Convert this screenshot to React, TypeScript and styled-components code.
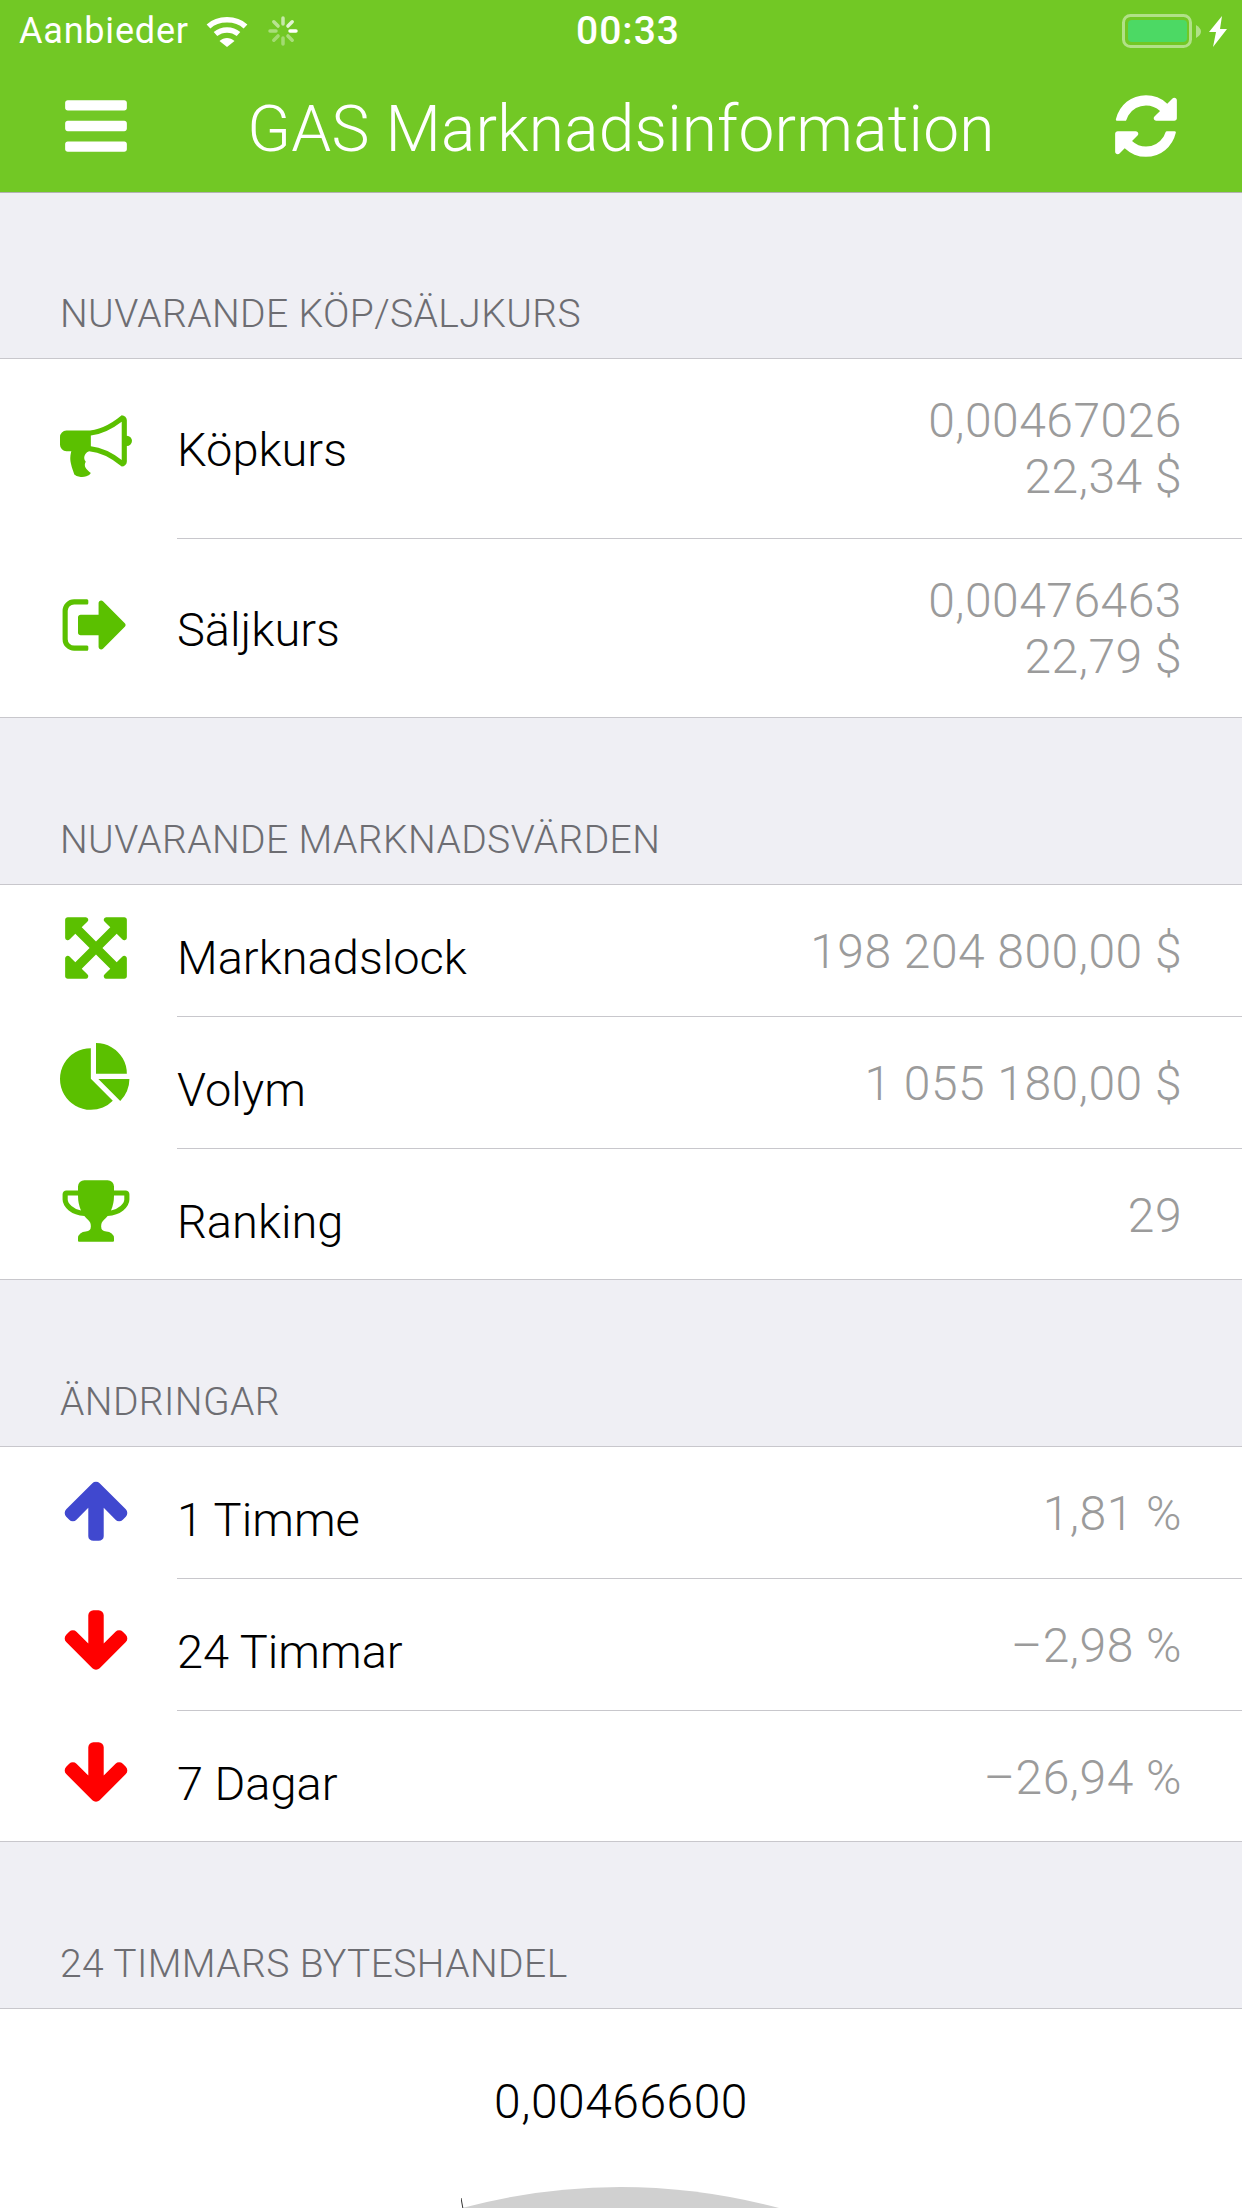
import React from 'react';
import styled, { createGlobalStyle } from 'styled-components';

const GlobalStyle = createGlobalStyle`
  html, body {
    margin: 0;
    padding: 0;
    background: #efeff4;
  }
`;

const FONT = `Roboto, "Liberation Sans", sans-serif`;

const ICONS = {
  bars: 'M1664 1344v128q0 26-19 45t-45 19h-1408q-26 0-45-19t-19-45v-128q0-26 19-45t45-19h1408q26 0 45 19t19 45zm0-512v128q0 26-19 45t-45 19h-1408q-26 0-45-19t-19-45v-128q0-26 19-45t45-19h1408q26 0 45 19t19 45zm0-512v128q0 26-19 45t-45 19h-1408q-26 0-45-19t-19-45v-128q0-26 19-45t45-19h1408q26 0 45 19t19 45z',
  refresh:
    'M1639 1056q0 5-1 7-64 268-268 434.5t-478 166.5q-146 0-282.5-55t-243.5-157l-129 129q-19 19-45 19t-45-19-19-45v-448q0-26 19-45t45-19h448q26 0 45 19t19 45-19 45l-137 137q71 66 161 102t187 36q134 0 250-65t186-179q11-17 53-117 8-23 30-23h192q13 0 22.5 9.5t9.5 22.5zm25-800v448q0 26-19 45t-45 19h-448q-26 0-45-19t-19-45 19-45l138-138q-148-137-349-137-134 0-250 65t-186 179q-11 17-53 117-8 23-30 23h-199q-13 0-22.5-9.5t-9.5-22.5v-7q65-268 270-434.5t480-166.5q146 0 284 55.5t245 156.5l130-129q19-19 45-19t45 19 19 45z',
  bullhorn:
    'M1664 640q53 0 90.5 37.5t37.5 90.5-37.5 90.5-90.5 37.5v384q0 52-38 90t-90 38q-417-347-812-380-58 19-91 66t-31 100.5 40 92.5q-20 33-23 65.5t6 58 33.5 55 48 50 61.5 50.5q-29 58-111.5 83t-168.5 11.5-132-55.5q-7-23-29.5-87.5t-32-94.5-23-89-15-101 3.5-98.5 22-110.5h-122q-66 0-113-47t-47-113v-192q0-66 47-113t113-47h480q435 0 896-384 52 0 90 38t38 90v384zm-128 604v-954q-394 302-768 343v270q377 42 768 341z',
  signOut:
    'M704 1440q0 4 1 20t.5 26.5-3 23.5-10 19.5-20.5 6.5h-320q-119 0-203.5-84.5t-84.5-203.5v-704q0-119 84.5-203.5t203.5-84.5h320q13 0 22.5 9.5t9.5 22.5q0 4 1 20t.5 26.5-3 23.5-10 19.5-20.5 6.5h-320q-66 0-113 47t-47 113v704q0 66 47 113t113 47h312l11.5 1 11.5 3 8 5.5 7 9 2 13.5zm928-544q0 26-19 45l-544 544q-19 19-45 19t-45-19-19-45v-288h-448q-26 0-45-19t-19-45v-384q0-26 19-45t45-19h448v-288q0-26 19-45t45-19 45 19l544 544q19 19 19 45z',
  expand:
    'M1411 541l-355 355 355 355 144-144q29-31 70-14 39 17 39 59v448q0 26-19 45t-45 19h-448q-42 0-59-40-17-39 14-69l144-144-355-355-355 355 144 144q31 30 14 69-17 40-59 40h-448q-26 0-45-19t-19-45v-448q0-42 40-59 39-17 69 14l144 144 355-355-355-355-144 144q-19 19-45 19-12 0-24-5-40-17-40-59v-448q0-26 19-45t45-19h448q42 0 59 40 17 39-14 69l-144 144 355 355 355-355-144-144q-31-30-14-69 17-40 59-40h448q26 0 45 19t19 45v448q0 42-39 59-13 5-25 5-26 0-45-19z',
  pie: 'M768 890l546 546q-106 108-247.5 168t-298.5 60q-209 0-385.5-103t-279.5-279.5-103-385.5 103-385.5 279.5-279.5 385.5-103v762zm187 6h773q0 157-60 298.5t-168 247.5zm709-128h-768v-768q209 0 385.5 103t279.5 279.5 103 385.5z',
  trophy:
    'M522 883q-74-162-74-371h-256v96q0 78 94.5 162t235.5 113zm1078-275v-96h-256q0 209-74 371 141-29 235.5-113t94.5-162zm128-128v128q0 71-41.5 143t-112 130-173 97.5-215.5 44.5q-42 54-95 95-38 34-52.5 72.5t-14.5 89.5q0 54 30.5 91t97.5 37q75 0 133.5 45.5t58.5 114.5v64q0 14-9 23t-23 9h-832q-14 0-23-9t-9-23v-64q0-69 58.5-114.5t133.5-45.5q67 0 97.5-37t30.5-91q0-51-14.5-89.5t-52.5-72.5q-53-41-95-95-113-5-215.5-44.5t-173-97.5-112-130-41.5-143v-128q0-40 28-68t68-28h288v-96q0-66 47-113t113-47h576q66 0 113 47t47 113v96h288q40 0 68 28t28 68z',
  up: 'M1675 971q0 51-37 90l-75 75q-38 38-91 38-54 0-90-38l-294-293v704q0 52-37.5 84.5t-90.5 32.5h-128q-53 0-90.5-32.5t-37.5-84.5v-704l-294 293q-36 38-90 38t-90-38l-75-75q-38-38-38-90 0-53 38-91l651-651q35-37 90-37 54 0 91 37l651 651q37 39 37 91z',
  down: 'M1675 832q0 53-37 90l-651 652q-39 37-91 37-53 0-90-37l-651-652q-38-36-38-90 0-53 38-91l74-75q39-37 91-37 53 0 90 37l294 294v-704q0-52 38-90t90-38h128q52 0 90 38t38 90v704l294-294q37-37 90-37 52 0 91 37l75 75q37 39 37 91z',
};

type IconName = keyof typeof ICONS;

const GREEN = '#5bc000';
const BLUE = '#4048cf';
const RED = '#ff0000';

const Page = styled.div`
  width: 1242px;
  height: 2208px;
  overflow: hidden;
  background: #efeff4;
  font-family: ${FONT};
`;

const Header = styled.header`
  height: 192px;
  background: #72c825;
  color: #fff;
  box-shadow: 0 1px 0 #b2b2b2;
`;

const StatusBar = styled.div`
  height: 62px;
  padding: 0 15px 0 19px;
  display: grid;
  grid-template-columns: 1fr auto 1fr;
  align-items: center;
`;

const StatusLeft = styled.div`
  display: flex;
  align-items: center;
  gap: 17px;
  font-size: 36px;
  letter-spacing: 0.8px;
`;

const StatusRight = styled.div`
  display: flex;
  align-items: center;
  justify-content: flex-end;
  gap: 8px;
`;

const Clock = styled.div`
  margin-left: 10px;
  font-size: 39px;
  font-weight: 500;
  letter-spacing: 1px;
`;

const NavBar = styled.div`
  height: 130px;
  box-sizing: border-box;
  padding: 0 60px 3px;
  display: flex;
  align-items: center;
  justify-content: space-between;
`;

const NavTitle = styled.h1`
  margin: 8px 0 0;
  font-size: 64px;
  font-weight: 300;
  letter-spacing: 0.2px;
  line-height: 1;
`;

const NavButton = styled.svg`
  width: 72px;
  height: 72px;
  fill: #fff;
  flex: none;
`;

const SectionTitle = styled.div`
  height: 166px;
  box-sizing: border-box;
  padding: 0 60px 22px;
  display: flex;
  align-items: flex-end;
  font-size: 39px;
  font-weight: 300;
  letter-spacing: 0.4px;
  line-height: 44px;
  color: #6d6d72;
`;

const Card = styled.section`
  background: #fff;
  border-top: 1px solid #c8c7cc;
  border-bottom: 1px solid #c8c7cc;
`;

const Row = styled.div<{ $tall?: boolean }>`
  height: ${({ $tall }) => ($tall ? '179px' : 'calc(394px / 3)')};
  display: flex;
  padding-left: 60px;
`;

const RowIcon = styled.svg<{ $color: string; $tall?: boolean }>`
  width: 72px;
  height: 72px;
  flex: none;
  margin-top: ${({ $tall }) => ($tall ? '51px' : '27px')};
  fill: ${({ $color }) => $color};
`;

const RowBody = styled.div<{ $first?: boolean }>`
  flex: 1;
  margin-left: 45px;
  padding-right: 60px;
  display: flex;
  justify-content: space-between;
  border-top: ${({ $first }) => ($first ? 'none' : '1px solid #c8c7cc')};
`;

const RowLabel = styled.div<{ $tall?: boolean }>`
  font-size: 47px;
  font-weight: 300;
  line-height: 56px;
  color: #000;
  margin-top: ${({ $tall }) => ($tall ? '63px' : '45px')};
`;

const RowValue = styled.div<{ $tall?: boolean }>`
  font-size: 48px;
  font-weight: 300;
  letter-spacing: 0.5px;
  line-height: 56px;
  color: #9b9b9b;
  text-align: right;
  margin-top: ${({ $tall }) => ($tall ? '34px' : '39px')};
`;

const GaugeCard = styled.section`
  background: #fff;
  border-top: 1px solid #c8c7cc;
  height: 200px;
  display: flex;
  flex-direction: column;
  align-items: center;
`;

const GaugeValue = styled.div`
  margin-top: 65px;
  font-size: 48px;
  font-weight: 300;
  letter-spacing: 0.5px;
  line-height: 56px;
  color: #000;
`;

const GaugeArc = styled.svg`
  margin-top: 57px;
  width: 320px;
  height: 22px;
  flex: none;
`;

type RowData = {
  icon: IconName;
  color: string;
  label: string;
  values: string[];
};

type SectionData = {
  title: string;
  tall?: boolean;
  rows: RowData[];
};

const SECTIONS: SectionData[] = [
  {
    title: 'NUVARANDE KÖP/SÄLJKURS',
    tall: true,
    rows: [
      { icon: 'bullhorn', color: GREEN, label: 'Köpkurs', values: ['0,00467026', '22,34 $'] },
      { icon: 'signOut', color: GREEN, label: 'Säljkurs', values: ['0,00476463', '22,79 $'] },
    ],
  },
  {
    title: 'NUVARANDE MARKNADSVÄRDEN',
    rows: [
      { icon: 'expand', color: GREEN, label: 'Marknadslock', values: ['198 204 800,00 $'] },
      { icon: 'pie', color: GREEN, label: 'Volym', values: ['1 055 180,00 $'] },
      { icon: 'trophy', color: GREEN, label: 'Ranking', values: ['29'] },
    ],
  },
  {
    title: 'ÄNDRINGAR',
    rows: [
      { icon: 'up', color: BLUE, label: '1 Timme', values: ['1,81 %'] },
      { icon: 'down', color: RED, label: '24 Timmar', values: ['–2,98 %'] },
      { icon: 'down', color: RED, label: '7 Dagar', values: ['–26,94 %'] },
    ],
  },
];

const SPINNER_TICKS = [
  { angle: 0, opacity: 0.6 },
  { angle: 45, opacity: 0.8 },
  { angle: 90, opacity: 1 },
  { angle: 135, opacity: 0.4 },
  { angle: 180, opacity: 0.35 },
  { angle: 225, opacity: 0.35 },
  { angle: 270, opacity: 0.4 },
  { angle: 315, opacity: 0.5 },
];

const WifiIcon = () => (
  <svg width="45" height="31" viewBox="0 0 45 31" fill="none" stroke="#fff" strokeWidth="5.5">
    <path d="M2.500 10.500C12 1.500 30 1.500 39.500 10.500" />
    <path d="M9.500 18C16 12.500 26 12.500 32.500 18" />
    <path d="M21 31L13.500 25C18 21 24 21 28.500 25Z" fill="#fff" stroke="none" />
  </svg>
);

const SpinnerIcon = () => (
  <svg width="30" height="30" viewBox="0 0 30 30" stroke="#fff" strokeWidth="3.5" strokeLinecap="round">
    {SPINNER_TICKS.map(({ angle, opacity }) => (
      <line key={angle} x1="15" y1="2" x2="15" y2="8" opacity={opacity} transform={`rotate(${angle} 15 15)`} />
    ))}
  </svg>
);

const BatteryIcon = () => (
  <svg width="79" height="34" viewBox="0 0 79 34">
    <rect x="1.500" y="1.500" width="67" height="31" rx="7" fill="none" stroke="#fff" strokeOpacity="0.45" strokeWidth="3" />
    <rect x="6" y="6" width="59" height="22" rx="4" fill="#4cd964" />
    <path d="M74 11Q79 14 79 17.500Q79 21 74 24Z" fill="#fff" fillOpacity="0.45" />
  </svg>
);

const BoltIcon = () => (
  <svg width="18" height="31" viewBox="0 0 18 31" fill="#fff">
    <path d="M13 0L0 16H7L4 31L18 13H11Z" />
  </svg>
);

export default function App() {
  return (
    <Page>
      <GlobalStyle />
      <Header>
        <StatusBar>
          <StatusLeft>
            Aanbieder
            <WifiIcon />
            <SpinnerIcon />
          </StatusLeft>
          <Clock>00:33</Clock>
          <StatusRight>
            <BatteryIcon />
            <BoltIcon />
          </StatusRight>
        </StatusBar>
        <NavBar>
          <NavButton viewBox="0 0 1792 1792">
            <path d={ICONS.bars} />
          </NavButton>
          <NavTitle>GAS Marknadsinformation</NavTitle>
          <NavButton viewBox="0 0 1792 1792">
            <path d={ICONS.refresh} />
          </NavButton>
        </NavBar>
      </Header>

      {SECTIONS.map((section) => (
        <div key={section.title}>
          <SectionTitle>{section.title}</SectionTitle>
          <Card>
            {section.rows.map((row, i) => (
              <Row key={row.label} $tall={section.tall}>
                <RowIcon viewBox="0 0 1792 1792" $color={row.color} $tall={section.tall}>
                  <path d={ICONS[row.icon]} />
                </RowIcon>
                <RowBody $first={i === 0}>
                  <RowLabel $tall={section.tall}>{row.label}</RowLabel>
                  <RowValue $tall={section.tall}>
                    {row.values.map((value) => (
                      <div key={value}>{value}</div>
                    ))}
                  </RowValue>
                </RowBody>
              </Row>
            ))}
          </Card>
        </div>
      ))}

      <SectionTitle>24 TIMMARS BYTESHANDEL</SectionTitle>
      <GaugeCard>
        <GaugeValue>0,00466600</GaugeValue>
        <GaugeArc viewBox="0 0 320 22">
          <path d="M1 21Q159 -21 318 21Z" fill="#d0d0d0" />
          <path d="M0 11L2 22" stroke="#333" strokeWidth="1" />
        </GaugeArc>
      </GaugeCard>
    </Page>
  );
}
